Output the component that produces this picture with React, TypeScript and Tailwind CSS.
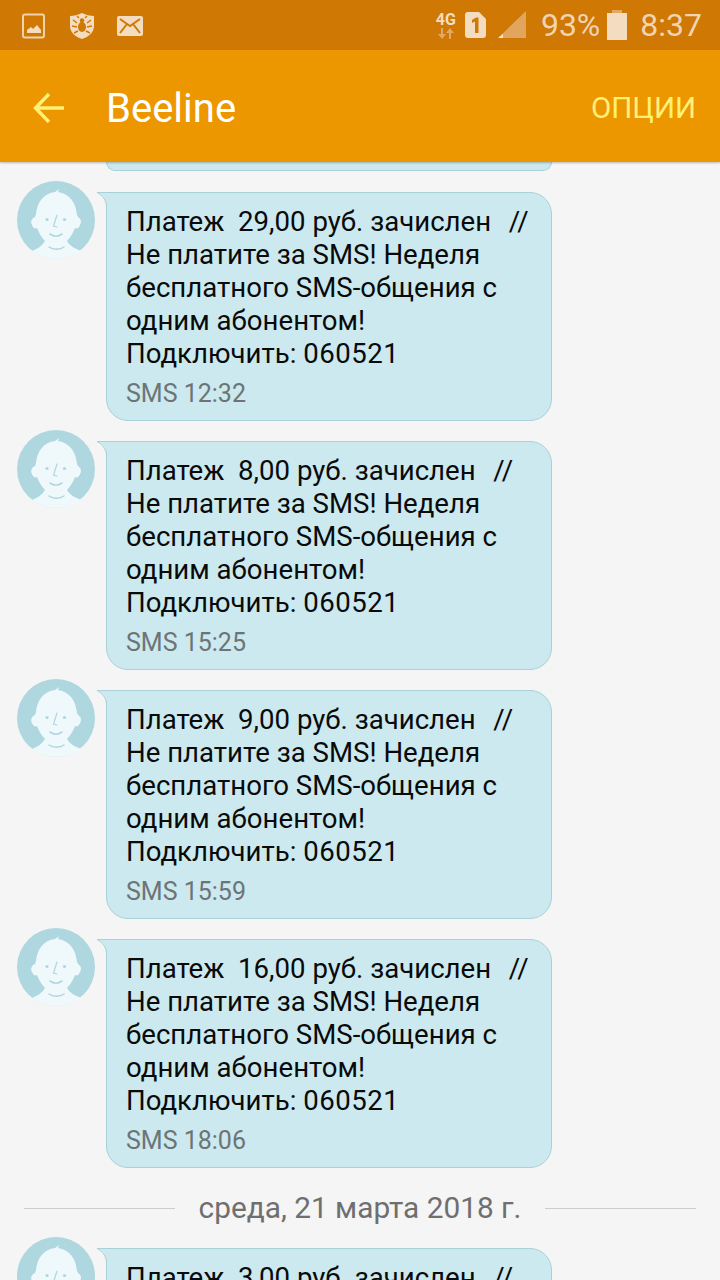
import React from 'react';

const font = { fontFamily: 'Roboto, sans-serif' };

const messages = [
  { amount: '29,00', time: '12:32' },
  { amount: '8,00', time: '15:25' },
  { amount: '9,00', time: '15:59' },
  { amount: '16,00', time: '18:06' },
];

const Avatar = () => (
  <svg width="78" height="78" viewBox="0 0 78 78" className="shrink-0 block">
    <circle cx="39" cy="39" r="39" fill="#afd7df" />
    <path d="M15 70 C20 68 25 65 28 60 L50 60 C53 65 58 68 65 70 C56 75 48 78 39 78 C30 78 22 75 15 70 Z" fill="#eff8fa" />
    <path
      d="M38 11 L42 8 L41 11 C53 13 59 22 60 34 L61 36 C64 38 65 41 63 44 C62 47 60 48 58 47 C55 56 47 65 39 65 C31 65 23 56 20 47 C18 48 16 47 15 44 C13 41 15 37 18 36 L19 33 C20 21 27 12 38 11 Z"
      fill="#eff8fa"
    />
    <path d="M32 66 C36 69 43 69 47 66" fill="none" stroke="#afd7df" strokeWidth="1.4" strokeLinecap="round" />
    <path d="M33 53 C37 56 41 56 45 53" fill="none" stroke="#afd7df" strokeWidth="1.6" strokeLinecap="round" />
    <circle cx="30" cy="38.5" r="1.6" fill="#afd7df" />
    <circle cx="47.5" cy="38.5" r="1.6" fill="#afd7df" />
    <path d="M40 34 L36.5 45 L40 46" fill="none" stroke="#afd7df" strokeWidth="1.2" strokeLinecap="round" />
  </svg>
);

const Tail = () => (
  <svg width="12" height="16" viewBox="0 0 12 16" className="absolute left-[-10px] top-[-1px]">
    <path d="M0 .5 L10 .5 L10 15 C10 8 6 3 0 .5 Z" fill="#cbe9ef" />
    <path d="M0 .5 L11 .5 M0 .5 C5 3 9.5 8 9.5 15" fill="none" stroke="#a9d1d8" strokeWidth="1" />
  </svg>
);

const Bubble = ({ amount, time }: { amount: string; time: string }) => (
  <div className="flex items-start pl-[17px]">
    <Avatar />
    <div className="relative ml-[11px] mt-[11px] w-[446px] h-[229px] rounded-[22px] rounded-tl-none border border-[#a9d1d8] bg-[#cbe9ef] pl-[19px] pt-[12px]">
      <Tail />
      <div className="text-[27.6px] leading-[33px] text-[#0a0a0a] whitespace-pre">
        {`Платеж  ${amount} руб. зачислен  `}
        <span className="ml-[4px]">//</span>
        {`\nНе платите за SMS! Неделя\nбесплатного SMS-общения с\nодним абонентом!\nПодключить: `}
        <span className="tracking-[0.5px]">060521</span>
      </div>
      <div className="mt-[7px] text-[25px] leading-[33px] text-[#6d7476]">SMS {time}</div>
    </div>
  </div>
);

const StatusBar = () => (
  <div className="h-[50px] bg-[#cf7804] flex items-center text-[#f4dcc0] shrink-0">
    <svg width="24" height="26" viewBox="0 0 24 26" className="ml-[22px] mt-[1px]">
      <rect x="1" y="1.5" width="21" height="23" rx="2" fill="none" stroke="#f0d2ae" strokeWidth="2" />
      <path d="M5 20 L5 17 L9 14 L11 16 L15 12 L19 17 L19 20 Z" fill="#f4dcc0" />
    </svg>
    <svg width="26" height="28" viewBox="0 0 26 28" className="ml-[23px] mt-[2px]">
      <path d="M13 1 C17 3 21 4 25 4 L25 14 C25 20 20 25 13 27 C6 25 1 20 1 14 L1 4 C5 4 9 3 13 1 Z" fill="#f4dcc0" />
      <ellipse cx="13" cy="15" rx="4" ry="5" fill="#cf7804" />
      <circle cx="13" cy="8.5" r="2.2" fill="#cf7804" />
      <path
        d="M8 11 L4 8 M18 11 L22 8 M8 15 L3 14 M18 15 L23 14 M9 19 L5 21 M17 19 L21 21 M10 6 L8 4 M16 6 L18 4"
        fill="none"
        stroke="#cf7804"
        strokeWidth="1.4"
      />
    </svg>
    <svg width="26" height="20" viewBox="0 0 26 20" className="ml-[22px] mt-[2px]">
      <rect width="26" height="20" rx="2" fill="#f4dcc0" />
      <path d="M3 3 L13 10 L23 3 M3 17 L10 8 M23 17 L16 8" fill="none" stroke="#cf7804" strokeWidth="2" />
    </svg>
    <div className="ml-auto flex items-center">
      <div className="flex flex-col items-center mr-[8px] w-[22px]">
        <span className="text-[16px] leading-[16px] font-bold">4G</span>
        <svg width="16" height="11" viewBox="0 0 16 11">
          <path d="M5 0 L5 6 L8 6 L4 11 L0 6 L3 6 L3 0 Z" fill="#e4a865" />
          <path d="M12 11 L12 5 L15 5 L11 0 L7 5 L10 5 L10 11 Z" fill="#e4a865" transform="translate(1 0)" />
        </svg>
      </div>
      <svg width="21" height="26" viewBox="0 0 21 26" className="mr-[12px]">
        <path d="M3 0 L14 0 L21 7 L21 23 Q21 26 18 26 L3 26 Q0 26 0 23 L0 3 Q0 0 3 0 Z" fill="#f4dcc0" />
        <path d="M7 8 L11 5.5 L13.5 5.5 L13.5 21 L10 21 L10 9.5 L7 11 Z" fill="#cf7804" />
      </svg>
      <svg width="28" height="28" viewBox="0 0 28 28" className="mr-[15px]">
        <path d="M28 0 L28 27 L0 27 Z" fill="#e2a55e" />
        <path d="M5 23 L5 27 L0 27 Z" fill="#f8e6d0" />
      </svg>
      <span className="text-[32px] leading-[50px] text-[#f0d4b4]">93%</span>
      <svg width="20" height="30" viewBox="0 0 20 30" className="ml-[7px]">
        <rect x="5" y="0" width="10" height="4" fill="#e4a865" />
        <rect x="0" y="3" width="20" height="27" fill="#f4dcc0" />
      </svg>
      <span className="text-[32px] leading-[50px] ml-[13px] mr-[18px] text-[#f0d4b4]">8:37</span>
    </div>
  </div>
);

export default function App() {
  return (
    <div className="w-[720px] h-[1280px] overflow-hidden bg-[#f5f5f5] flex flex-col" style={font}>
      <StatusBar />
      <div className="relative z-10 h-[112px] shrink-0 bg-[#ec9600] flex items-center shadow-[0_1px_2px_rgba(0,0,0,0.25)]">
        <svg width="32" height="32" viewBox="0 0 32 32" className="ml-[33px] mt-[4px]">
          <path d="M31 16 L3 16 M16 2 L2.5 16 L16 30" fill="none" stroke="#fff176" strokeWidth="3.4" />
        </svg>
        <span className="ml-[41px] text-[40px] leading-[48px] mt-[5px] text-white">Beeline</span>
        <span className="ml-auto mr-[24px] mt-[4px] text-[29.5px] leading-[40px] text-[#fff176]">ОПЦИИ</span>
      </div>
      <div className="flex-1 overflow-hidden">
        <div className="ml-[106px] w-[446px] h-[9px] rounded-b-[22px] border border-t-0 border-[#a9d1d8] bg-[#cbe9ef]" />
        <div className="mt-[10px] flex flex-col gap-[9px]">
          {messages.map(m => (
            <Bubble key={m.time} amount={m.amount} time={m.time} />
          ))}
        </div>
        <div className="mt-[20px] mx-[24px] flex items-center gap-[24px]">
          <div className="h-px flex-1 bg-[#cccccc]" />
          <span className="text-[29.8px] leading-[40px] text-[#6f6f6f]">среда, 21 марта 2018 г.</span>
          <div className="h-px flex-1 bg-[#cccccc]" />
        </div>
        <div className="mt-[9px]">
          <Bubble amount="3,00" time="09:12" />
        </div>
      </div>
    </div>
  );
}
